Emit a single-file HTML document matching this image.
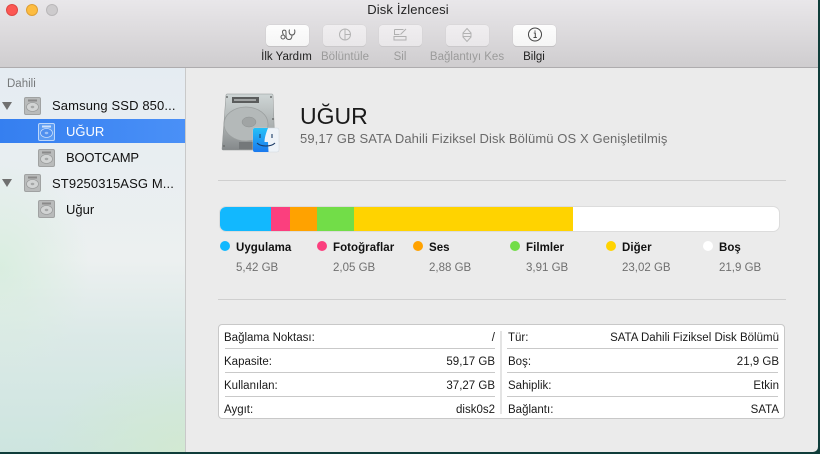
<!DOCTYPE html>
<html><head><meta charset="utf-8"><style>
html,body{margin:0;padding:0}
body{width:820px;height:454px;overflow:hidden;position:relative;background:#0f3d3a;font-family:"Liberation Sans",sans-serif;color:#111}
.a{position:absolute;white-space:nowrap}
#win{position:absolute;left:0;top:0;width:818px;height:452px;background:#ebebeb;overflow:hidden;border-radius:0 0 5px 0}
#bar{position:absolute;left:0;top:0;width:818px;height:67px;background:linear-gradient(#e9e7ea,#cfcdcf);border-bottom:1px solid #aeacae}
.dot{position:absolute;top:4px;width:12px;height:12px;border-radius:50%;box-sizing:border-box}
.btn{position:absolute;top:25px;width:43px;height:21px;box-sizing:border-box;border-radius:4px;background:linear-gradient(#fdfdfd,#f5f5f5);box-shadow:0 0 0 .5px #cfcdcf,0 1px 0 #b9b7b9}
.btn.d{background:linear-gradient(#f0eef0,#e9e7e9);box-shadow:0 0 0 .5px #d4d2d4,0 1px 0 #c2c0c2}
.btn svg{position:absolute;left:0;top:0}
.tl{position:absolute;top:50px;font-size:11.500px;line-height:14px;text-align:center;color:#222;white-space:nowrap}
.tl.d{color:#9b9b9b}
#side{position:absolute;left:0;top:68px;width:185px;height:384px;border-right:1px solid #c9c9c9;background:radial-gradient(ellipse 90px 110px at 0 52%,rgba(215,237,222,.9),rgba(215,237,222,0)),radial-gradient(ellipse 140px 90px at 100% 100%,#d2e9d2,rgba(210,233,210,0)),linear-gradient(180deg,#e5ecf2 0,#ecf0f0 50%,#dbe9e7 70%,#cde5df 100%)}
.row{position:absolute;font-size:13px;line-height:16px;color:#111;white-space:nowrap}
.tri{position:absolute;width:0;height:0;border-left:5px solid transparent;border-right:5px solid transparent;border-top:8px solid #707070}
.hd{position:absolute}
.dotc{position:absolute;top:241px;width:10px;height:10px;border-radius:50%}
.ln{position:absolute;top:241px;font-size:11.500px;letter-spacing:.05px;font-weight:bold;line-height:14px;color:#111;white-space:nowrap}
.lv{position:absolute;top:261px;font-size:11.500px;line-height:14px;color:#6f6f6f;white-space:nowrap}
.sep{position:absolute;left:218px;width:568px;height:1px;background:#cfcfcf}
.seg{position:absolute;top:0;height:24px}
.k,.v{position:absolute;font-size:11.500px;line-height:14px;color:#1a1a1a;white-space:nowrap}
.v{text-align:right}
.il{position:absolute;height:1px;background:#c9c9c9}
</style></head><body>
<div id="win">
<div id="bar">
<div class="dot" style="left:6px;background:#fc5753;border:.5px solid #df4744"></div>
<div class="dot" style="left:26px;background:#fdbc40;border:.5px solid #de9f34"></div>
<div class="dot" style="left:46px;background:#cdcbcd;border:.5px solid #b9b7b9"></div>
<div class="a" style="left:-1px;width:818px;text-align:center;top:2px;font-size:13px;letter-spacing:.15px;line-height:16px;color:#222">Disk İzlencesi</div>

<div class="btn" style="left:266px"><svg width="43" height="22" fill="none" stroke="#5a5a5a" stroke-width="1"><path d="M23.500 4.500c-1 3 0 5.500 2.500 5.500s3.500-2.500 2.500-5.500"/><path d="M26 10c0 3-1 4.500-3 4.500s-3-1.500-3-3.500V7c0-2.500-3.500-2.500-3.500 0 0 1 .5 2 1 2.500"/><circle cx="17" cy="12" r="2"/></svg></div>
<div class="btn d" style="left:323px"><svg width="43" height="22" fill="none" stroke="#b3b3b3" stroke-width="1"><circle cx="22" cy="9.500" r="5.500"/><path d="M22 4v11M22 9.500h5.500"/></svg></div>
<div class="btn d" style="left:379px"><svg width="43" height="22" fill="none" stroke="#b0b0b0" stroke-width="1"><path d="M15.500 4.500h9M15.500 4.500v5h5M15 11.500h12v3.500h-12zM21.500 9.500l5.500-5.500"/></svg></div>
<div class="btn d" style="left:446px"><svg width="43" height="22" fill="none" stroke="#b3b3b3" stroke-width="1"><path d="M21 3.500l4 4.500v4l-4 4.500-4-4.500v-4zM17 8.500h8M17 11.500h8"/></svg></div>
<div class="btn" style="left:513px"><svg width="43" height="22" fill="none" stroke="#444" stroke-width="1"><circle cx="22" cy="9.500" r="6.500"/><path d="M20.800 8h1.500v4.500M20.500 12.500h3.300M22 5.500v1.300"/></svg></div>

<div class="tl" style="left:246.500px;width:80px">İlk Yardım</div>
<div class="tl d" style="left:305px;width:80px">Bölüntüle</div>
<div class="tl d" style="left:360px;width:80px">Sil</div>
<div class="tl d" style="left:417px;width:100px">Bağlantıyı Kes</div>
<div class="tl" style="left:494px;width:80px">Bilgi</div>
</div>

<div id="side">
<div class="a" style="left:7px;top:9px;font-size:11.500px;line-height:14px;color:#77797b">Dahili</div>
<div class="a" style="left:0;top:51px;width:185px;height:24px;background:linear-gradient(90deg,#357ff0,#4a90f7)"></div>
<div class="tri" style="left:2px;top:34px"></div>
<div class="tri" style="left:2px;top:111px"></div>
<svg class="hd" style="left:24px;top:29px" width="17" height="18"><rect x=".5" y=".5" width="16" height="17" rx="1.500" fill="#b9bbbb" stroke="#a0a2a2"/><rect x="4" y="2.500" width="9" height="2" fill="#8a8a8a"/><ellipse cx="8.500" cy="10" rx="6" ry="4.500" fill="#d2d4d4" stroke="#9a9c9c" stroke-width=".7"/><ellipse cx="8.500" cy="10" rx="1.800" ry="1.200" fill="#a5a7a7"/></svg>
<svg class="hd" style="left:38px;top:55px" width="17" height="18"><rect x=".5" y=".5" width="16" height="17" rx="1.500" fill="#5b9bf3" stroke="#bcd6fa"/><rect x="4" y="2.500" width="9" height="2" fill="#cfe1fb"/><ellipse cx="8.500" cy="10" rx="6" ry="4.500" fill="#4f8fee" stroke="#cfe1fb" stroke-width=".7"/><ellipse cx="8.500" cy="10" rx="1.800" ry="1.200" fill="#9fc3f7"/></svg>
<svg class="hd" style="left:38px;top:81px" width="17" height="18"><rect x=".5" y=".5" width="16" height="17" rx="1.500" fill="#b9bbbb" stroke="#a0a2a2"/><rect x="4" y="2.500" width="9" height="2" fill="#8a8a8a"/><ellipse cx="8.500" cy="10" rx="6" ry="4.500" fill="#d2d4d4" stroke="#9a9c9c" stroke-width=".7"/><ellipse cx="8.500" cy="10" rx="1.800" ry="1.200" fill="#a5a7a7"/></svg>
<svg class="hd" style="left:24px;top:106px" width="17" height="18"><rect x=".5" y=".5" width="16" height="17" rx="1.500" fill="#b9bbbb" stroke="#a0a2a2"/><rect x="4" y="2.500" width="9" height="2" fill="#8a8a8a"/><ellipse cx="8.500" cy="10" rx="6" ry="4.500" fill="#d2d4d4" stroke="#9a9c9c" stroke-width=".7"/><ellipse cx="8.500" cy="10" rx="1.800" ry="1.200" fill="#a5a7a7"/></svg>
<svg class="hd" style="left:38px;top:132px" width="17" height="18"><rect x=".5" y=".5" width="16" height="17" rx="1.500" fill="#b9bbbb" stroke="#a0a2a2"/><rect x="4" y="2.500" width="9" height="2" fill="#8a8a8a"/><ellipse cx="8.500" cy="10" rx="6" ry="4.500" fill="#d2d4d4" stroke="#9a9c9c" stroke-width=".7"/><ellipse cx="8.500" cy="10" rx="1.800" ry="1.200" fill="#a5a7a7"/></svg>
<div class="row" style="left:52px;top:30px;letter-spacing:.12px">Samsung SSD 850...</div>
<div class="row" style="left:66px;top:56px;color:#fff">UĞUR</div>
<div class="row" style="left:66px;top:82px;letter-spacing:-.2px">BOOTCAMP</div>
<div class="row" style="left:52px;top:108px;letter-spacing:.12px">ST9250315ASG M...</div>
<div class="row" style="left:66px;top:134px">Uğur</div>
</div>

<svg class="a" style="left:220px;top:92px" width="64" height="62">
<defs><linearGradient id="g" x1="0" y1="0" x2="0" y2="1"><stop offset="0" stop-color="#cfd6d6"/><stop offset=".6" stop-color="#a9aeae"/><stop offset="1" stop-color="#84888a"/></linearGradient>
<linearGradient id="fb" x1="0" y1="0" x2="0" y2="1"><stop offset="0" stop-color="#25c0f8"/><stop offset="1" stop-color="#1a78ee"/></linearGradient></defs>
<path d="M7 2h45q1 0 1 1l2 54q0 1-1 1H3q-1 0-1-1L6 3q0-1 1-1z" fill="url(#g)" stroke="#8f9393" stroke-width=".5"/>
<circle cx="7" cy="5" r="1" fill="#6d7070"/><circle cx="51" cy="5" r="1" fill="#6d7070"/><circle cx="5" cy="34" r="1" fill="#6d7070"/><circle cx="53" cy="27" r="1" fill="#6d7070"/><circle cx="4" cy="54" r="1" fill="#6d7070"/>
<rect x="12" y="5" width="27" height="6" fill="#5a5c5c"/>
<rect x="14" y="7" width="22" height="2" fill="#a0a3a3"/>
<ellipse cx="26" cy="32" rx="22" ry="17" fill="#b4b9b9" stroke="#9b9f9f" stroke-width=".8"/>
<ellipse cx="29" cy="30" rx="7" ry="5" fill="#a0a4a4" stroke="#8e9292" stroke-width=".5"/>
<rect x="19" y="50" width="14" height="7" fill="#74787a"/>
<rect x="33" y="36" width="26" height="24" rx="2" fill="#eef3f8" stroke="#cfd6dd" stroke-width=".5"/>
<path d="M35 36h13c-2 5-3.500 10-3.500 14H48l.5 10H35a2 2 0 0 1-2-2V38a2 2 0 0 1 2-2z" fill="url(#fb)"/>
<path d="M40 42v4M52 42v4M37 51c4 4 14 4 18 0" fill="none" stroke="#1b3b66" stroke-width="1.100"/>
</svg>
<div class="a" style="left:300px;top:102px;font-size:23px;line-height:28px;color:#1a1a1a">UĞUR</div>
<div class="a" style="left:300px;top:131px;font-size:13px;letter-spacing:.1px;line-height:16px;color:#6a6a6a">59,17 GB SATA Dahili Fiziksel Disk Bölümü OS X Genişletilmiş</div>

<div class="sep" style="top:180px"></div>
<div class="sep" style="top:299px"></div>

<div class="a" style="left:220px;top:207px;width:559px;height:24px;background:#fff;border-radius:6px;overflow:hidden;box-shadow:0 0 0 1px #dcdcdc">
<div class="seg" style="left:0;width:51px;background:#12b8fe"></div>
<div class="seg" style="left:51px;width:19px;background:#fb3f7e"></div>
<div class="seg" style="left:70px;width:27px;background:#ffa200"></div>
<div class="seg" style="left:97px;width:37px;background:#72dd48"></div>
<div class="seg" style="left:134px;width:219px;background:#ffd300"></div>
</div>

<div class="dotc" style="left:220px;background:#12b8fe"></div>
<div class="dotc" style="left:317px;background:#fb3f7e"></div>
<div class="dotc" style="left:413px;background:#ffa200"></div>
<div class="dotc" style="left:510px;background:#72dd48"></div>
<div class="dotc" style="left:606px;background:#ffd300"></div>
<div class="dotc" style="left:703px;background:#fff"></div>
<div class="ln" style="left:236px">Uygulama</div>
<div class="ln" style="left:333px">Fotoğraflar</div>
<div class="ln" style="left:429px">Ses</div>
<div class="ln" style="left:526px">Filmler</div>
<div class="ln" style="left:622px">Diğer</div>
<div class="ln" style="left:719px">Boş</div>
<div class="lv" style="left:236px">5,42 GB</div>
<div class="lv" style="left:333px">2,05 GB</div>
<div class="lv" style="left:429px">2,88 GB</div>
<div class="lv" style="left:526px">3,91 GB</div>
<div class="lv" style="left:622px">23,02 GB</div>
<div class="lv" style="left:719px">21,9 GB</div>

<div class="a" style="left:218px;top:324px;width:565px;height:93px;background:#fff;border:1px solid #c8c8c8;border-radius:4px"></div>
<div class="a" style="left:500px;top:331px;width:2px;height:83px;background:#e4e4e4"></div>
<div class="il" style="left:225px;top:348px;width:270px"></div>
<div class="il" style="left:225px;top:372px;width:270px"></div>
<div class="il" style="left:225px;top:396px;width:270px"></div>
<div class="il" style="left:507px;top:348px;width:271px"></div>
<div class="il" style="left:507px;top:372px;width:271px"></div>
<div class="il" style="left:507px;top:396px;width:271px"></div>

<div class="k" style="left:224px;top:331px">Bağlama Noktası:</div>
<div class="k" style="left:224px;top:355px">Kapasite:</div>
<div class="k" style="left:224px;top:379px">Kullanılan:</div>
<div class="k" style="left:224px;top:403px">Aygıt:</div>
<div class="v" style="right:323px;top:331px">/</div>
<div class="v" style="right:323px;top:355px">59,17 GB</div>
<div class="v" style="right:323px;top:379px">37,27 GB</div>
<div class="v" style="right:323px;top:403px">disk0s2</div>
<div class="k" style="left:508px;top:331px">Tür:</div>
<div class="k" style="left:508px;top:355px">Boş:</div>
<div class="k" style="left:508px;top:379px">Sahiplik:</div>
<div class="k" style="left:508px;top:403px">Bağlantı:</div>
<div class="v" style="right:39px;top:331px">SATA Dahili Fiziksel Disk Bölümü</div>
<div class="v" style="right:39px;top:355px">21,9 GB</div>
<div class="v" style="right:39px;top:379px">Etkin</div>
<div class="v" style="right:39px;top:403px">SATA</div>
</div>
</body></html>
